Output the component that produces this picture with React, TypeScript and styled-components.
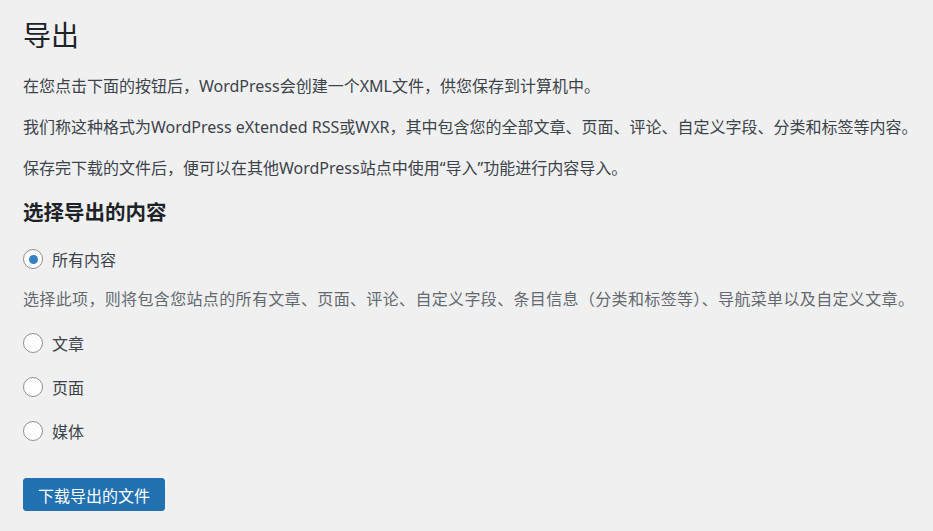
import React, { useState } from "react";
import styled, { createGlobalStyle } from "styled-components";

const Global = createGlobalStyle`
  html, body { margin: 0; padding: 0; background: #f0f0f1; }
  body {
    font-family: "Noto Sans", "Noto Sans CJK SC", sans-serif;
    color: #3c434a;
    font-size: 16px;
  }
`;

const Wrap = styled.div`
  padding: 18px 20px 20px 23px;
`;

const Title = styled.h1`
  margin: 0 0 21px;
  font-size: 28px;
  line-height: 35px;
  font-weight: 400;
  color: #1d2327;
`;

const Para = styled.p`
  margin: 0 0 17px;
  font-size: 16px;
  line-height: 24px;
  white-space: nowrap;
`;

const SubTitle = styled.h2`
  margin: 18px 0 20px;
  font-size: 20.5px;
  line-height: 29px;
  font-weight: 700;
  color: #1d2327;
`;

const List = styled.div`
  display: flex;
  flex-direction: column;
  gap: 20px;
`;

const Label = styled.label`
  display: flex;
  align-items: center;
  gap: 9px;
  height: 24px;
  font-size: 16px;
  color: #3c434a;
  cursor: pointer;
`;

const Radio = styled.span<{ $checked: boolean }>`
  box-sizing: border-box;
  width: 20px;
  height: 20px;
  border-radius: 50%;
  border: 1px solid #8c8f94;
  background: #fff;
  display: flex;
  align-items: center;
  justify-content: center;
  &::after {
    content: "";
    width: 9px;
    height: 9px;
    border-radius: 50%;
    background: #3582c4;
    display: ${(p) => (p.$checked ? "block" : "none")};
  }
`;

const Description = styled.p`
  margin: -4px 0 0;
  font-size: 16px;
  line-height: 24px;
  letter-spacing: 0.35px;
  color: #646970;
  white-space: nowrap;
`;

const Button = styled.button`
  margin-top: 35px;
  height: 33px;
  padding: 0 14px;
  border: 1px solid #2271b1;
  border-radius: 3px;
  background: #2271b1;
  color: #fff;
  font-family: "Noto Sans", "Noto Sans CJK SC", sans-serif;
  font-size: 16px;
  cursor: pointer;
`;

const options = [
  { key: "all", label: "所有内容" },
  { key: "posts", label: "文章" },
  { key: "pages", label: "页面" },
  { key: "media", label: "媒体" },
];

export default function App() {
  const [sel, setSel] = useState("all");
  return (
    <>
      <Global />
      <Wrap>
        <Title>导出</Title>
        <Para>在您点击下面的按钮后，WordPress会创建一个XML文件，供您保存到计算机中。</Para>
        <Para>我们称这种格式为WordPress eXtended RSS或WXR，其中包含您的全部文章、页面、评论、自定义字段、分类和标签等内容。</Para>
        <Para>保存完下载的文件后，便可以在其他WordPress站点中使用“导入”功能进行内容导入。</Para>
        <SubTitle>选择导出的内容</SubTitle>
        <List>
          {options.map((o) => (
            <React.Fragment key={o.key}>
              <Label onClick={() => setSel(o.key)}>
                <Radio $checked={sel === o.key} />
                {o.label}
              </Label>
              {o.key === "all" && (
                <Description>
                  选择此项，则将包含您站点的所有文章、页面、评论、自定义字段、条目信息（分类和标签等）、导航菜单以及自定义文章。
                </Description>
              )}
            </React.Fragment>
          ))}
        </List>
        <Button>下载导出的文件</Button>
      </Wrap>
    </>
  );
}
